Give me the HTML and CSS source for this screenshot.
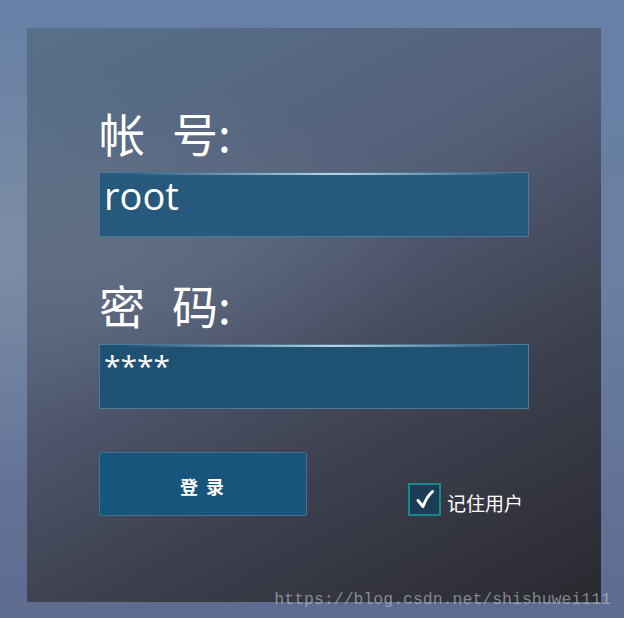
FILE: index.html
```html
<!DOCTYPE html>
<html lang="zh-CN">
<head>
    <meta charset="UTF-8">
    <meta name="viewport" content="width=device-width, initial-scale=1.0">
    <title>登录</title>
    <link rel="stylesheet" href="styles.css">
</head>
<body>

    <div class="panel">
        <!-- 帐号 -->
        <div class="label">帐<span class="gap"></span>号:</div>
        <div class="field user">root</div>

        <!-- 密码 -->
        <div class="label second">密<span class="gap"></span>码:</div>
        <div class="field pass">****</div>

        <div class="actions">
            <button class="login">登 录</button>
            <label class="remember">
                <span class="box">
                    <svg width="22" height="22" viewBox="0 0 22 22">
                        <path d="M4 11.5 L9 17.5 C11 12 14 6.5 18.5 2.5" fill="none" stroke="#fff" stroke-width="3" stroke-linecap="round" stroke-linejoin="round"/>
                    </svg>
                </span>
                <span class="text">记住用户</span>
            </label>
        </div>
    </div>

    <div class="watermark">https://blog.csdn.net/shishuwei111</div>

</body>
</html>
```

FILE: styles.css
```css
html, body {
    margin: 0;
    height: 618px;
    overflow: hidden;
}
body {
    position: relative;
    padding-top: 28px;
    box-sizing: border-box;
    font-family: "Noto Sans CJK SC", sans-serif;
    color: #fff;
    background:
        radial-gradient(ellipse at 0% 40%, rgba(150, 160, 170, 0.4), transparent 45%),
        linear-gradient(180deg, #6680a6 0%, #6a7fa2 45%, #5d6b8f 100%);
}
.panel {
    width: 574px;
    height: 574px;
    margin-left: 27px;
    box-sizing: border-box;
    padding: 81px 72px 0 72px;
    background:
        radial-gradient(ellipse 60% 30% at 10% 38%, rgba(130, 145, 155, 0.25), transparent),
        linear-gradient(152deg, #57708a 0%, #556079 38%, #3d404f 68%, #29292f 100%);
}
.label {
    font-size: 46px;
    line-height: 46px;
    height: 46px;
    white-space: nowrap;
}
.label .gap {
    display: inline-block;
    width: 27px;
}
.label.second {
    margin-top: 44px;
}
.field {
    margin-top: 17px;
    width: 430px;
    height: 65px;
    box-sizing: border-box;
    border: 1px solid #4c7b99;
    padding: 0 4px;
    font-family: "Open Sans", sans-serif;
}
.field.user {
    font-size: 38px;
    line-height: 45px;
    background:
        linear-gradient(90deg, rgba(200, 225, 240, 0) 5%, rgba(205, 225, 238, 0.9) 55%, rgba(200, 225, 240, 0) 97%) top / 100% 2px no-repeat,
        #26597b;
}
.field.pass {
    font-size: 30px;
    line-height: 30px;
    padding-top: 6px;
    background:
        linear-gradient(90deg, rgba(200, 225, 240, 0) 5%, rgba(205, 225, 238, 0.9) 55%, rgba(200, 225, 240, 0) 97%) top / 100% 2px no-repeat,
        #1f5173;
}
.actions {
    margin-top: 43px;
    display: flex;
    align-items: flex-end;
}
.login {
    width: 208px;
    height: 64px;
    border: 1px solid #46728f;
    border-radius: 2px;
    background-color: #18557c;
    color: #fff;
    font-family: "Noto Sans CJK SC", sans-serif;
    font-size: 18px;
    font-weight: bold;
    letter-spacing: 2px;
    padding: 3px 0 0 0;
    cursor: pointer;
}
.remember {
    margin-left: 101px;
    display: flex;
    align-items: center;
    gap: 6px;
    font-size: 19px;
    line-height: 20px;
}
.remember .text {
    padding-top: 6px;
}
.remember .box {
    width: 33px;
    height: 33px;
    box-sizing: border-box;
    border: 2px solid #17878f;
    background-color: #1b3e55;
    display: flex;
    align-items: center;
    justify-content: center;
}
.watermark {
    position: absolute;
    right: 13px;
    bottom: 9px;
    font-family: "Liberation Mono", monospace;
    font-size: 16.5px;
    color: rgba(190, 196, 204, 0.6);
}
```
